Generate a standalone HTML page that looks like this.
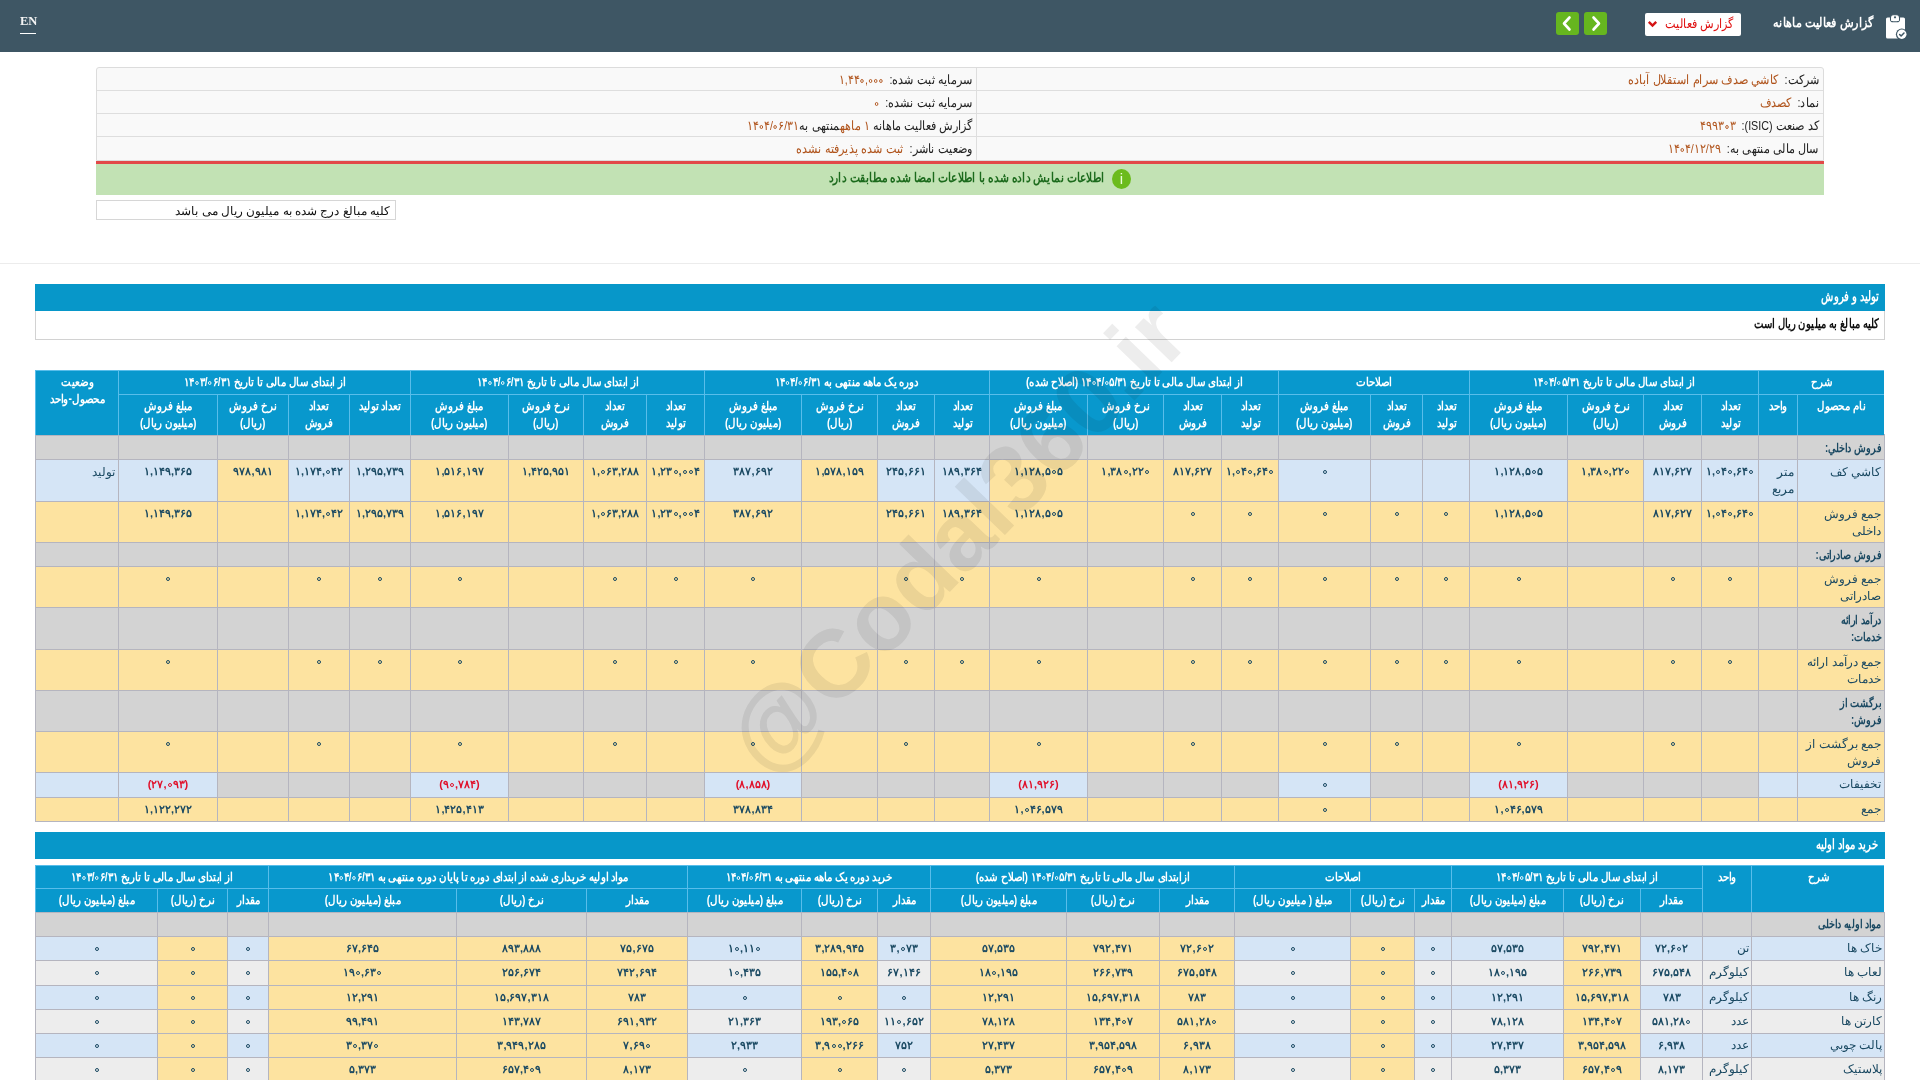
<!DOCTYPE html>
<html lang="fa" dir="rtl">
<head>
<meta charset="utf-8">
<title>گزارش فعالیت ماهانه</title>
<style>
*{box-sizing:border-box;margin:0;padding:0}
html,body{width:1920px;height:1080px;overflow:hidden;background:#fff;font-family:"Liberation Sans",sans-serif;color:#222}
#top{position:absolute;left:0;top:0;width:1920px;height:52px;background:#3e5664}
.abs{position:absolute}
.c,.h{position:absolute;border-left:1px solid #b5b5bf;border-top:1px solid #b5b5bf;text-align:center;font-size:12px;line-height:17px;color:#1a4962;overflow:hidden;white-space:nowrap}
.h{color:#fff;font-weight:bold;border-color:#58bdea;padding-top:3px;line-height:17px}
.h2{padding-top:3px}
.h3{padding-top:3px}
.v{padding-top:3px;font-weight:bold;font-size:11px}
.n{text-align:right;padding-right:3px;padding-top:4px}
.b{font-weight:bold}
.s{padding-top:3px}
.red{color:#e0102a}
.t2{line-height:22px}
.v2{font-weight:bold;font-size:11px}
.nb2{padding-top:0}
.r{text-align:right;padding-right:2px}
.tbl{position:absolute;border-right:1px solid #b5b5bf;border-bottom:1px solid #b5b5bf}
.info{position:absolute;font-size:12.5px;color:#222;white-space:nowrap}
.ov{color:#b0541c}
.sec{font-size:13.5px;font-weight:bold;color:#fff;white-space:nowrap}
.t{display:inline-block;white-space:nowrap}
.ltr{direction:ltr;unicode-bidi:isolate}
.h .t{transform:scaleX(.85);transform-origin:50% 0}
.n .t{transform-origin:100% 0}
.n.b .t{transform:scaleX(.8)}
i.z{display:inline-block;width:4px;height:4px;border:1.3px solid currentColor;border-radius:50%;vertical-align:1px;margin:0 1px}
.sx{display:inline-block;transform:scaleX(.86);transform-origin:100% 50%}
.sx2{display:inline-block;transform:scaleX(.8);transform-origin:100% 50%}
</style>
</head>
<body>
<div id="top">
  <div class="abs" style="left:20px;top:15px;font-family:'Liberation Serif',serif;font-size:12.5px;font-weight:bold;line-height:13px;color:#f4f4f4;direction:ltr">EN</div>
  <div class="abs" style="left:20px;top:33px;width:16px;height:1px;background:#fff"></div>
  <div class="abs" style="left:1556px;top:12px;width:23px;height:23px;background:#66b61f;border-radius:3px"><svg width="23" height="23" viewBox="0 0 23 23"><path d="M13.5 5.5 L8 11.5 L13.5 17.5" fill="none" stroke="#fff" stroke-width="2.6" stroke-linecap="round" stroke-linejoin="round"/></svg></div>
  <div class="abs" style="left:1584px;top:12px;width:23px;height:23px;background:#66b61f;border-radius:3px"><svg width="23" height="23" viewBox="0 0 23 23"><path d="M9.5 5.5 L15 11.5 L9.5 17.5" fill="none" stroke="#fff" stroke-width="2.6" stroke-linecap="round" stroke-linejoin="round"/></svg></div>
  <div class="abs" style="left:1645px;top:13px;width:96px;height:23px;background:#fff;border-radius:2px"></div>
  <svg class="abs" style="left:1647px;top:19px" width="11" height="10" viewBox="0 0 11 10"><path d="M1.8 2.8 L5.5 6.6 L9.2 2.8" fill="none" stroke="#d41414" stroke-width="2.4"/></svg>
  <div class="abs" style="right:186px;top:16px;font-size:13px;color:#e01010;white-space:nowrap"><span class="sx">گزارش فعالیت</span></div>
  <div class="abs" style="right:47px;top:15px;font-size:13px;color:#fff;font-weight:bold;white-space:nowrap"><span class="sx">گزارش فعالیت ماهانه</span></div>
  <svg class="abs" style="left:1884px;top:13px" width="26" height="28" viewBox="0 0 26 28">
    <rect x="2" y="4.5" width="19" height="21" rx="1.6" fill="#fff"/>
    <rect x="6.5" y="1.8" width="9" height="7" rx="2.6" fill="#fff" stroke="#3e5664" stroke-width="1.1"/>
    <rect x="7.2" y="5" width="7.6" height="3" fill="#fff"/>
    <circle cx="11" cy="4.3" r="1.1" fill="#3e5664"/>
    <circle cx="17.8" cy="21.3" r="5.9" fill="#3e5664"/>
    <circle cx="17.8" cy="21.3" r="4.7" fill="#fff"/>
    <path d="M15.6 21.5 l1.5 1.5 l2.9-3" fill="none" stroke="#3e5664" stroke-width="1.5" stroke-linecap="round" stroke-linejoin="round"/>
  </svg>
</div>
</div>

<!-- info box -->
<div class="abs" style="left:96px;top:67px;width:1728px;height:94px;background:#f9f9f9;border:1px solid #dcdcdc;border-radius:3px 3px 0 0"></div>
<div class="abs" style="left:97px;top:90px;width:1726px;height:1px;background:#dedede"></div>
<div class="abs" style="left:97px;top:113px;width:1726px;height:1px;background:#dedede"></div>
<div class="abs" style="left:97px;top:136px;width:1726px;height:1px;background:#dedede"></div>
<div class="abs" style="left:976px;top:68px;width:1px;height:93px;background:#dedede"></div>
<div class="info" style="right:101px;top:72px"><span class="sx">شرکت:&nbsp; <span class="ov">كاشي صدف سرام استقلال آباده</span></span></div>
<div class="info" style="right:101px;top:95px"><span class="sx">نماد:&nbsp; <span class="ov">كصدف</span></span></div>
<div class="info" style="right:101px;top:118px"><span class="sx">کد صنعت (ISIC):&nbsp; <span class="ov"><span class="ltr">۴۹۹۳<i class="z"></i>۳</span></span></span></div>
<div class="info" style="right:101px;top:141px"><span class="sx">سال مالی منتهی به:&nbsp; <span class="ov"><span class="ltr">۱۴<i class="z"></i>۴/۱۲/۲۹</span></span></span></div>
<div class="info" style="right:948px;top:72px"><span class="sx">سرمایه ثبت شده:&nbsp; <span class="ov"><span class="ltr">۱,۴۴<i class="z"></i>,<i class="z"></i><i class="z"></i><i class="z"></i></span></span></span></div>
<div class="info" style="right:948px;top:95px"><span class="sx">سرمایه ثبت نشده:&nbsp; <span class="ov"><span class="ltr"><i class="z"></i></span></span></span></div>
<div class="info" style="right:948px;top:118px"><span class="sx">گزارش فعالیت ماهانه <span class="ov"><span class="ltr">۱</span> ماهه</span>منتهی به<span class="ov"><span class="ltr">۱۴<i class="z"></i>۴/<i class="z"></i>۶/۳۱</span></span></span></div>
<div class="info" style="right:948px;top:141px"><span class="sx">وضعیت ناشر:&nbsp; <span class="ov">ثبت شده پذیرفته نشده</span></span></div>
<div class="abs" style="left:96px;top:161px;width:1728px;height:3px;background:#e24848"></div>
<div class="abs" style="left:96px;top:164px;width:1728px;height:31px;background:#c2e2b4"></div>
<div class="abs" style="left:1112px;top:169px;width:19px;height:20px;border-radius:50%;background:#6bbb1c;color:#eaffd8;font-size:15px;line-height:20px;text-align:center;font-family:'Liberation Sans',sans-serif">i</div>
<div class="abs" style="right:815px;top:170px;font-size:13px;font-weight:bold;color:#1b6a1c;white-space:nowrap"><span class="sx" style="transform:scaleX(.82)">اطلاعات نمایش داده شده با اطلاعات امضا شده مطابقت دارد</span></div>
<div class="abs" style="left:96px;top:200px;width:300px;height:20px;border:1px solid #d6d6d6;background:#fff"></div>
<div class="abs" style="right:1530px;top:204px;font-size:12px;color:#111;white-space:nowrap">کلیه مبالغ درج شده به میلیون ریال می باشد</div>
<div class="abs" style="left:0;top:263px;width:1920px;height:1px;background:#ececec"></div>
<!-- section 1 -->
<div class="abs" style="left:35px;top:284px;width:1850px;height:27px;background:#0797c9"></div>
<div class="abs sec" style="right:41px;top:288px"><span class="sx2" style="transform:scaleX(.72)">تولید و فروش</span></div>
<div class="abs" style="left:35px;top:311px;width:1850px;height:29px;border:1px solid #d2d2d2;border-top:none;background:#fff"></div>
<div class="abs" style="right:41px;top:316px;font-size:13px;font-weight:bold;color:#111;white-space:nowrap"><span class="sx2" style="transform:scaleX(.77)">کلیه مبالغ به میلیون ریال است</span></div>
<!-- section 2 -->
<div class="abs" style="left:35px;top:832px;width:1850px;height:27px;background:#0797c9"></div>
<div class="abs sec" style="right:41px;top:836px"><span class="sx2" style="transform:scaleX(.72)">خرید مواد اولیه</span></div>
<div class="h" style="left:1758px;top:370px;width:126px;height:24px;background:#0898cd;"><span class="t">شرح</span></div>
<div class="h" style="left:1469px;top:370px;width:289px;height:24px;background:#0898cd;"><span class="t">از ابتدای سال مالی تا تاریخ <span class="ltr">۱۴<i class="z"></i>۴/<i class="z"></i>۵/۳۱</span></span></div>
<div class="h" style="left:1278px;top:370px;width:191px;height:24px;background:#0898cd;"><span class="t">اصلاحات</span></div>
<div class="h" style="left:989px;top:370px;width:289px;height:24px;background:#0898cd;"><span class="t">از ابتدای سال مالی تا تاریخ <span class="ltr">۱۴<i class="z"></i>۴/<i class="z"></i>۵/۳۱</span> (اصلاح شده)</span></div>
<div class="h" style="left:704px;top:370px;width:285px;height:24px;background:#0898cd;"><span class="t">دوره یک ماهه منتهی به <span class="ltr">۱۴<i class="z"></i>۴/<i class="z"></i>۶/۳۱</span></span></div>
<div class="h" style="left:410px;top:370px;width:294px;height:24px;background:#0898cd;"><span class="t">از ابتدای سال مالی تا تاریخ <span class="ltr">۱۴<i class="z"></i>۴/<i class="z"></i>۶/۳۱</span></span></div>
<div class="h" style="left:118px;top:370px;width:292px;height:24px;background:#0898cd;"><span class="t">از ابتدای سال مالی تا تاریخ <span class="ltr">۱۴<i class="z"></i>۳/<i class="z"></i>۶/۳۱</span></span></div>
<div class="h h2" style="left:1797px;top:394px;width:87px;height:41px;background:#0898cd;"><span class="t">نام محصول</span></div>
<div class="h h2" style="left:1758px;top:394px;width:39px;height:41px;background:#0898cd;"><span class="t">واحد</span></div>
<div class="h h2" style="left:1701px;top:394px;width:57px;height:41px;background:#0898cd;"><span class="t">تعداد<br>تولید</span></div>
<div class="h h2" style="left:1643px;top:394px;width:58px;height:41px;background:#0898cd;"><span class="t">تعداد<br>فروش</span></div>
<div class="h h2" style="left:1567px;top:394px;width:76px;height:41px;background:#0898cd;"><span class="t">نرخ فروش<br>(ریال)</span></div>
<div class="h h2" style="left:1469px;top:394px;width:98px;height:41px;background:#0898cd;"><span class="t">مبلغ فروش<br>(میلیون ریال)</span></div>
<div class="h h2" style="left:1221px;top:394px;width:57px;height:41px;background:#0898cd;"><span class="t">تعداد<br>تولید</span></div>
<div class="h h2" style="left:1163px;top:394px;width:58px;height:41px;background:#0898cd;"><span class="t">تعداد<br>فروش</span></div>
<div class="h h2" style="left:1087px;top:394px;width:76px;height:41px;background:#0898cd;"><span class="t">نرخ فروش<br>(ریال)</span></div>
<div class="h h2" style="left:989px;top:394px;width:98px;height:41px;background:#0898cd;"><span class="t">مبلغ فروش<br>(میلیون ریال)</span></div>
<div class="h h2" style="left:934px;top:394px;width:55px;height:41px;background:#0898cd;"><span class="t">تعداد<br>تولید</span></div>
<div class="h h2" style="left:877px;top:394px;width:57px;height:41px;background:#0898cd;"><span class="t">تعداد<br>فروش</span></div>
<div class="h h2" style="left:801px;top:394px;width:76px;height:41px;background:#0898cd;"><span class="t">نرخ فروش<br>(ریال)</span></div>
<div class="h h2" style="left:704px;top:394px;width:97px;height:41px;background:#0898cd;"><span class="t">مبلغ فروش<br>(میلیون ریال)</span></div>
<div class="h h2" style="left:646px;top:394px;width:58px;height:41px;background:#0898cd;"><span class="t">تعداد<br>تولید</span></div>
<div class="h h2" style="left:583px;top:394px;width:63px;height:41px;background:#0898cd;"><span class="t">تعداد<br>فروش</span></div>
<div class="h h2" style="left:508px;top:394px;width:75px;height:41px;background:#0898cd;"><span class="t">نرخ فروش<br>(ریال)</span></div>
<div class="h h2" style="left:410px;top:394px;width:98px;height:41px;background:#0898cd;"><span class="t">مبلغ فروش<br>(میلیون ریال)</span></div>
<div class="h h2" style="left:1422px;top:394px;width:47px;height:41px;background:#0898cd;"><span class="t">تعداد<br>تولید</span></div>
<div class="h h2" style="left:1370px;top:394px;width:52px;height:41px;background:#0898cd;"><span class="t">تعداد<br>فروش</span></div>
<div class="h h2" style="left:1278px;top:394px;width:92px;height:41px;background:#0898cd;"><span class="t">مبلغ فروش<br>(میلیون ریال)</span></div>
<div class="h h2" style="left:349px;top:394px;width:61px;height:41px;background:#0898cd;"><span class="t">تعداد تولید</span></div>
<div class="h h2" style="left:288px;top:394px;width:61px;height:41px;background:#0898cd;"><span class="t">تعداد<br>فروش</span></div>
<div class="h h2" style="left:217px;top:394px;width:71px;height:41px;background:#0898cd;"><span class="t">نرخ فروش<br>(ریال)</span></div>
<div class="h h2" style="left:118px;top:394px;width:99px;height:41px;background:#0898cd;"><span class="t">مبلغ فروش<br>(میلیون ریال)</span></div>
<div class="h h3" style="left:35px;top:370px;width:83px;height:65px;background:#0898cd;"><span class="t">وضعیت<br>محصول-واحد</span></div>
<div class="c n b" style="left:1797px;top:435px;width:87px;height:24px;background:#d3d3d3;"><span class="t">فروش داخلي:</span></div>
<div class="c n" style="left:1758px;top:435px;width:39px;height:24px;background:#d3d3d3;"></div>
<div class="c v" style="left:1701px;top:435px;width:57px;height:24px;background:#d3d3d3;"></div>
<div class="c v" style="left:1643px;top:435px;width:58px;height:24px;background:#d3d3d3;"></div>
<div class="c v" style="left:1567px;top:435px;width:76px;height:24px;background:#d3d3d3;"></div>
<div class="c v" style="left:1469px;top:435px;width:98px;height:24px;background:#d3d3d3;"></div>
<div class="c v" style="left:1422px;top:435px;width:47px;height:24px;background:#d3d3d3;"></div>
<div class="c v" style="left:1370px;top:435px;width:52px;height:24px;background:#d3d3d3;"></div>
<div class="c v" style="left:1278px;top:435px;width:92px;height:24px;background:#d3d3d3;"></div>
<div class="c v" style="left:1221px;top:435px;width:57px;height:24px;background:#d3d3d3;"></div>
<div class="c v" style="left:1163px;top:435px;width:58px;height:24px;background:#d3d3d3;"></div>
<div class="c v" style="left:1087px;top:435px;width:76px;height:24px;background:#d3d3d3;"></div>
<div class="c v" style="left:989px;top:435px;width:98px;height:24px;background:#d3d3d3;"></div>
<div class="c v" style="left:934px;top:435px;width:55px;height:24px;background:#d3d3d3;"></div>
<div class="c v" style="left:877px;top:435px;width:57px;height:24px;background:#d3d3d3;"></div>
<div class="c v" style="left:801px;top:435px;width:76px;height:24px;background:#d3d3d3;"></div>
<div class="c v" style="left:704px;top:435px;width:97px;height:24px;background:#d3d3d3;"></div>
<div class="c v" style="left:646px;top:435px;width:58px;height:24px;background:#d3d3d3;"></div>
<div class="c v" style="left:583px;top:435px;width:63px;height:24px;background:#d3d3d3;"></div>
<div class="c v" style="left:508px;top:435px;width:75px;height:24px;background:#d3d3d3;"></div>
<div class="c v" style="left:410px;top:435px;width:98px;height:24px;background:#d3d3d3;"></div>
<div class="c v" style="left:349px;top:435px;width:61px;height:24px;background:#d3d3d3;"></div>
<div class="c v" style="left:288px;top:435px;width:61px;height:24px;background:#d3d3d3;"></div>
<div class="c v" style="left:217px;top:435px;width:71px;height:24px;background:#d3d3d3;"></div>
<div class="c v" style="left:118px;top:435px;width:99px;height:24px;background:#d3d3d3;"></div>
<div class="c n" style="left:35px;top:435px;width:83px;height:24px;background:#d3d3d3;"></div>
<div class="c n" style="left:1797px;top:459px;width:87px;height:42px;background:#d5e5f6;"><span class="t">کاشي کف</span></div>
<div class="c n" style="left:1758px;top:459px;width:39px;height:42px;background:#d5e5f6;"><span class="t">متر<br>مربع</span></div>
<div class="c v" style="left:1701px;top:459px;width:57px;height:42px;background:#d5e5f6;"><span class="t"><span class="ltr">۱,<i class="z"></i>۴<i class="z"></i>,۶۴<i class="z"></i></span></span></div>
<div class="c v" style="left:1643px;top:459px;width:58px;height:42px;background:#d5e5f6;"><span class="t"><span class="ltr">۸۱۷,۶۲۷</span></span></div>
<div class="c v" style="left:1567px;top:459px;width:76px;height:42px;background:#fde3a0;"><span class="t"><span class="ltr">۱,۳۸<i class="z"></i>,۲۲<i class="z"></i></span></span></div>
<div class="c v" style="left:1469px;top:459px;width:98px;height:42px;background:#d5e5f6;"><span class="t"><span class="ltr">۱,۱۲۸,۵<i class="z"></i>۵</span></span></div>
<div class="c v" style="left:1422px;top:459px;width:47px;height:42px;background:#d5e5f6;"></div>
<div class="c v" style="left:1370px;top:459px;width:52px;height:42px;background:#d5e5f6;"></div>
<div class="c v" style="left:1278px;top:459px;width:92px;height:42px;background:#d5e5f6;"><span class="t"><span class="ltr"><i class="z"></i></span></span></div>
<div class="c v" style="left:1221px;top:459px;width:57px;height:42px;background:#fde3a0;"><span class="t"><span class="ltr">۱,<i class="z"></i>۴<i class="z"></i>,۶۴<i class="z"></i></span></span></div>
<div class="c v" style="left:1163px;top:459px;width:58px;height:42px;background:#fde3a0;"><span class="t"><span class="ltr">۸۱۷,۶۲۷</span></span></div>
<div class="c v" style="left:1087px;top:459px;width:76px;height:42px;background:#fde3a0;"><span class="t"><span class="ltr">۱,۳۸<i class="z"></i>,۲۲<i class="z"></i></span></span></div>
<div class="c v" style="left:989px;top:459px;width:98px;height:42px;background:#fde3a0;"><span class="t"><span class="ltr">۱,۱۲۸,۵<i class="z"></i>۵</span></span></div>
<div class="c v" style="left:934px;top:459px;width:55px;height:42px;background:#d5e5f6;"><span class="t"><span class="ltr">۱۸۹,۳۶۴</span></span></div>
<div class="c v" style="left:877px;top:459px;width:57px;height:42px;background:#d5e5f6;"><span class="t"><span class="ltr">۲۴۵,۶۶۱</span></span></div>
<div class="c v" style="left:801px;top:459px;width:76px;height:42px;background:#fde3a0;"><span class="t"><span class="ltr">۱,۵۷۸,۱۵۹</span></span></div>
<div class="c v" style="left:704px;top:459px;width:97px;height:42px;background:#d5e5f6;"><span class="t"><span class="ltr">۳۸۷,۶۹۲</span></span></div>
<div class="c v" style="left:646px;top:459px;width:58px;height:42px;background:#fde3a0;"><span class="t"><span class="ltr">۱,۲۳<i class="z"></i>,<i class="z"></i><i class="z"></i>۴</span></span></div>
<div class="c v" style="left:583px;top:459px;width:63px;height:42px;background:#fde3a0;"><span class="t"><span class="ltr">۱,<i class="z"></i>۶۳,۲۸۸</span></span></div>
<div class="c v" style="left:508px;top:459px;width:75px;height:42px;background:#fde3a0;"><span class="t"><span class="ltr">۱,۴۲۵,۹۵۱</span></span></div>
<div class="c v" style="left:410px;top:459px;width:98px;height:42px;background:#fde3a0;"><span class="t"><span class="ltr">۱,۵۱۶,۱۹۷</span></span></div>
<div class="c v" style="left:349px;top:459px;width:61px;height:42px;background:#d5e5f6;"><span class="t"><span class="ltr">۱,۲۹۵,۷۳۹</span></span></div>
<div class="c v" style="left:288px;top:459px;width:61px;height:42px;background:#d5e5f6;"><span class="t"><span class="ltr">۱,۱۷۴,<i class="z"></i>۴۲</span></span></div>
<div class="c v" style="left:217px;top:459px;width:71px;height:42px;background:#fde3a0;"><span class="t"><span class="ltr">۹۷۸,۹۸۱</span></span></div>
<div class="c v" style="left:118px;top:459px;width:99px;height:42px;background:#d5e5f6;"><span class="t"><span class="ltr">۱,۱۴۹,۳۶۵</span></span></div>
<div class="c n" style="left:35px;top:459px;width:83px;height:42px;background:#d5e5f6;"><span class="t">تولید</span></div>
<div class="c n" style="left:1797px;top:501px;width:87px;height:41px;background:#fde3a0;"><span class="t">جمع فروش<br>داخلی</span></div>
<div class="c n" style="left:1758px;top:501px;width:39px;height:41px;background:#fde3a0;"></div>
<div class="c v" style="left:1701px;top:501px;width:57px;height:41px;background:#fde3a0;"><span class="t"><span class="ltr">۱,<i class="z"></i>۴<i class="z"></i>,۶۴<i class="z"></i></span></span></div>
<div class="c v" style="left:1643px;top:501px;width:58px;height:41px;background:#fde3a0;"><span class="t"><span class="ltr">۸۱۷,۶۲۷</span></span></div>
<div class="c v" style="left:1567px;top:501px;width:76px;height:41px;background:#fde3a0;"></div>
<div class="c v" style="left:1469px;top:501px;width:98px;height:41px;background:#fde3a0;"><span class="t"><span class="ltr">۱,۱۲۸,۵<i class="z"></i>۵</span></span></div>
<div class="c v" style="left:1422px;top:501px;width:47px;height:41px;background:#fde3a0;"><span class="t"><span class="ltr"><i class="z"></i></span></span></div>
<div class="c v" style="left:1370px;top:501px;width:52px;height:41px;background:#fde3a0;"><span class="t"><span class="ltr"><i class="z"></i></span></span></div>
<div class="c v" style="left:1278px;top:501px;width:92px;height:41px;background:#fde3a0;"><span class="t"><span class="ltr"><i class="z"></i></span></span></div>
<div class="c v" style="left:1221px;top:501px;width:57px;height:41px;background:#fde3a0;"><span class="t"><span class="ltr"><i class="z"></i></span></span></div>
<div class="c v" style="left:1163px;top:501px;width:58px;height:41px;background:#fde3a0;"><span class="t"><span class="ltr"><i class="z"></i></span></span></div>
<div class="c v" style="left:1087px;top:501px;width:76px;height:41px;background:#fde3a0;"></div>
<div class="c v" style="left:989px;top:501px;width:98px;height:41px;background:#fde3a0;"><span class="t"><span class="ltr">۱,۱۲۸,۵<i class="z"></i>۵</span></span></div>
<div class="c v" style="left:934px;top:501px;width:55px;height:41px;background:#fde3a0;"><span class="t"><span class="ltr">۱۸۹,۳۶۴</span></span></div>
<div class="c v" style="left:877px;top:501px;width:57px;height:41px;background:#fde3a0;"><span class="t"><span class="ltr">۲۴۵,۶۶۱</span></span></div>
<div class="c v" style="left:801px;top:501px;width:76px;height:41px;background:#fde3a0;"></div>
<div class="c v" style="left:704px;top:501px;width:97px;height:41px;background:#fde3a0;"><span class="t"><span class="ltr">۳۸۷,۶۹۲</span></span></div>
<div class="c v" style="left:646px;top:501px;width:58px;height:41px;background:#fde3a0;"><span class="t"><span class="ltr">۱,۲۳<i class="z"></i>,<i class="z"></i><i class="z"></i>۴</span></span></div>
<div class="c v" style="left:583px;top:501px;width:63px;height:41px;background:#fde3a0;"><span class="t"><span class="ltr">۱,<i class="z"></i>۶۳,۲۸۸</span></span></div>
<div class="c v" style="left:508px;top:501px;width:75px;height:41px;background:#fde3a0;"></div>
<div class="c v" style="left:410px;top:501px;width:98px;height:41px;background:#fde3a0;"><span class="t"><span class="ltr">۱,۵۱۶,۱۹۷</span></span></div>
<div class="c v" style="left:349px;top:501px;width:61px;height:41px;background:#fde3a0;"><span class="t"><span class="ltr">۱,۲۹۵,۷۳۹</span></span></div>
<div class="c v" style="left:288px;top:501px;width:61px;height:41px;background:#fde3a0;"><span class="t"><span class="ltr">۱,۱۷۴,<i class="z"></i>۴۲</span></span></div>
<div class="c v" style="left:217px;top:501px;width:71px;height:41px;background:#fde3a0;"></div>
<div class="c v" style="left:118px;top:501px;width:99px;height:41px;background:#fde3a0;"><span class="t"><span class="ltr">۱,۱۴۹,۳۶۵</span></span></div>
<div class="c n" style="left:35px;top:501px;width:83px;height:41px;background:#fde3a0;"></div>
<div class="c n b" style="left:1797px;top:542px;width:87px;height:24px;background:#d3d3d3;"><span class="t">فروش صادراتی:</span></div>
<div class="c n" style="left:1758px;top:542px;width:39px;height:24px;background:#d3d3d3;"></div>
<div class="c v" style="left:1701px;top:542px;width:57px;height:24px;background:#d3d3d3;"></div>
<div class="c v" style="left:1643px;top:542px;width:58px;height:24px;background:#d3d3d3;"></div>
<div class="c v" style="left:1567px;top:542px;width:76px;height:24px;background:#d3d3d3;"></div>
<div class="c v" style="left:1469px;top:542px;width:98px;height:24px;background:#d3d3d3;"></div>
<div class="c v" style="left:1422px;top:542px;width:47px;height:24px;background:#d3d3d3;"></div>
<div class="c v" style="left:1370px;top:542px;width:52px;height:24px;background:#d3d3d3;"></div>
<div class="c v" style="left:1278px;top:542px;width:92px;height:24px;background:#d3d3d3;"></div>
<div class="c v" style="left:1221px;top:542px;width:57px;height:24px;background:#d3d3d3;"></div>
<div class="c v" style="left:1163px;top:542px;width:58px;height:24px;background:#d3d3d3;"></div>
<div class="c v" style="left:1087px;top:542px;width:76px;height:24px;background:#d3d3d3;"></div>
<div class="c v" style="left:989px;top:542px;width:98px;height:24px;background:#d3d3d3;"></div>
<div class="c v" style="left:934px;top:542px;width:55px;height:24px;background:#d3d3d3;"></div>
<div class="c v" style="left:877px;top:542px;width:57px;height:24px;background:#d3d3d3;"></div>
<div class="c v" style="left:801px;top:542px;width:76px;height:24px;background:#d3d3d3;"></div>
<div class="c v" style="left:704px;top:542px;width:97px;height:24px;background:#d3d3d3;"></div>
<div class="c v" style="left:646px;top:542px;width:58px;height:24px;background:#d3d3d3;"></div>
<div class="c v" style="left:583px;top:542px;width:63px;height:24px;background:#d3d3d3;"></div>
<div class="c v" style="left:508px;top:542px;width:75px;height:24px;background:#d3d3d3;"></div>
<div class="c v" style="left:410px;top:542px;width:98px;height:24px;background:#d3d3d3;"></div>
<div class="c v" style="left:349px;top:542px;width:61px;height:24px;background:#d3d3d3;"></div>
<div class="c v" style="left:288px;top:542px;width:61px;height:24px;background:#d3d3d3;"></div>
<div class="c v" style="left:217px;top:542px;width:71px;height:24px;background:#d3d3d3;"></div>
<div class="c v" style="left:118px;top:542px;width:99px;height:24px;background:#d3d3d3;"></div>
<div class="c n" style="left:35px;top:542px;width:83px;height:24px;background:#d3d3d3;"></div>
<div class="c n" style="left:1797px;top:566px;width:87px;height:41px;background:#fde3a0;"><span class="t">جمع فروش<br>صادراتی</span></div>
<div class="c n" style="left:1758px;top:566px;width:39px;height:41px;background:#fde3a0;"></div>
<div class="c v" style="left:1701px;top:566px;width:57px;height:41px;background:#fde3a0;"><span class="t"><span class="ltr"><i class="z"></i></span></span></div>
<div class="c v" style="left:1643px;top:566px;width:58px;height:41px;background:#fde3a0;"><span class="t"><span class="ltr"><i class="z"></i></span></span></div>
<div class="c v" style="left:1567px;top:566px;width:76px;height:41px;background:#fde3a0;"></div>
<div class="c v" style="left:1469px;top:566px;width:98px;height:41px;background:#fde3a0;"><span class="t"><span class="ltr"><i class="z"></i></span></span></div>
<div class="c v" style="left:1422px;top:566px;width:47px;height:41px;background:#fde3a0;"><span class="t"><span class="ltr"><i class="z"></i></span></span></div>
<div class="c v" style="left:1370px;top:566px;width:52px;height:41px;background:#fde3a0;"><span class="t"><span class="ltr"><i class="z"></i></span></span></div>
<div class="c v" style="left:1278px;top:566px;width:92px;height:41px;background:#fde3a0;"><span class="t"><span class="ltr"><i class="z"></i></span></span></div>
<div class="c v" style="left:1221px;top:566px;width:57px;height:41px;background:#fde3a0;"><span class="t"><span class="ltr"><i class="z"></i></span></span></div>
<div class="c v" style="left:1163px;top:566px;width:58px;height:41px;background:#fde3a0;"><span class="t"><span class="ltr"><i class="z"></i></span></span></div>
<div class="c v" style="left:1087px;top:566px;width:76px;height:41px;background:#fde3a0;"></div>
<div class="c v" style="left:989px;top:566px;width:98px;height:41px;background:#fde3a0;"><span class="t"><span class="ltr"><i class="z"></i></span></span></div>
<div class="c v" style="left:934px;top:566px;width:55px;height:41px;background:#fde3a0;"><span class="t"><span class="ltr"><i class="z"></i></span></span></div>
<div class="c v" style="left:877px;top:566px;width:57px;height:41px;background:#fde3a0;"><span class="t"><span class="ltr"><i class="z"></i></span></span></div>
<div class="c v" style="left:801px;top:566px;width:76px;height:41px;background:#fde3a0;"></div>
<div class="c v" style="left:704px;top:566px;width:97px;height:41px;background:#fde3a0;"><span class="t"><span class="ltr"><i class="z"></i></span></span></div>
<div class="c v" style="left:646px;top:566px;width:58px;height:41px;background:#fde3a0;"><span class="t"><span class="ltr"><i class="z"></i></span></span></div>
<div class="c v" style="left:583px;top:566px;width:63px;height:41px;background:#fde3a0;"><span class="t"><span class="ltr"><i class="z"></i></span></span></div>
<div class="c v" style="left:508px;top:566px;width:75px;height:41px;background:#fde3a0;"></div>
<div class="c v" style="left:410px;top:566px;width:98px;height:41px;background:#fde3a0;"><span class="t"><span class="ltr"><i class="z"></i></span></span></div>
<div class="c v" style="left:349px;top:566px;width:61px;height:41px;background:#fde3a0;"><span class="t"><span class="ltr"><i class="z"></i></span></span></div>
<div class="c v" style="left:288px;top:566px;width:61px;height:41px;background:#fde3a0;"><span class="t"><span class="ltr"><i class="z"></i></span></span></div>
<div class="c v" style="left:217px;top:566px;width:71px;height:41px;background:#fde3a0;"></div>
<div class="c v" style="left:118px;top:566px;width:99px;height:41px;background:#fde3a0;"><span class="t"><span class="ltr"><i class="z"></i></span></span></div>
<div class="c n" style="left:35px;top:566px;width:83px;height:41px;background:#fde3a0;"></div>
<div class="c n b" style="left:1797px;top:607px;width:87px;height:42px;background:#d3d3d3;"><span class="t">درآمد ارائه<br>خدمات:</span></div>
<div class="c n" style="left:1758px;top:607px;width:39px;height:42px;background:#d3d3d3;"></div>
<div class="c v" style="left:1701px;top:607px;width:57px;height:42px;background:#d3d3d3;"></div>
<div class="c v" style="left:1643px;top:607px;width:58px;height:42px;background:#d3d3d3;"></div>
<div class="c v" style="left:1567px;top:607px;width:76px;height:42px;background:#d3d3d3;"></div>
<div class="c v" style="left:1469px;top:607px;width:98px;height:42px;background:#d3d3d3;"></div>
<div class="c v" style="left:1422px;top:607px;width:47px;height:42px;background:#d3d3d3;"></div>
<div class="c v" style="left:1370px;top:607px;width:52px;height:42px;background:#d3d3d3;"></div>
<div class="c v" style="left:1278px;top:607px;width:92px;height:42px;background:#d3d3d3;"></div>
<div class="c v" style="left:1221px;top:607px;width:57px;height:42px;background:#d3d3d3;"></div>
<div class="c v" style="left:1163px;top:607px;width:58px;height:42px;background:#d3d3d3;"></div>
<div class="c v" style="left:1087px;top:607px;width:76px;height:42px;background:#d3d3d3;"></div>
<div class="c v" style="left:989px;top:607px;width:98px;height:42px;background:#d3d3d3;"></div>
<div class="c v" style="left:934px;top:607px;width:55px;height:42px;background:#d3d3d3;"></div>
<div class="c v" style="left:877px;top:607px;width:57px;height:42px;background:#d3d3d3;"></div>
<div class="c v" style="left:801px;top:607px;width:76px;height:42px;background:#d3d3d3;"></div>
<div class="c v" style="left:704px;top:607px;width:97px;height:42px;background:#d3d3d3;"></div>
<div class="c v" style="left:646px;top:607px;width:58px;height:42px;background:#d3d3d3;"></div>
<div class="c v" style="left:583px;top:607px;width:63px;height:42px;background:#d3d3d3;"></div>
<div class="c v" style="left:508px;top:607px;width:75px;height:42px;background:#d3d3d3;"></div>
<div class="c v" style="left:410px;top:607px;width:98px;height:42px;background:#d3d3d3;"></div>
<div class="c v" style="left:349px;top:607px;width:61px;height:42px;background:#d3d3d3;"></div>
<div class="c v" style="left:288px;top:607px;width:61px;height:42px;background:#d3d3d3;"></div>
<div class="c v" style="left:217px;top:607px;width:71px;height:42px;background:#d3d3d3;"></div>
<div class="c v" style="left:118px;top:607px;width:99px;height:42px;background:#d3d3d3;"></div>
<div class="c n" style="left:35px;top:607px;width:83px;height:42px;background:#d3d3d3;"></div>
<div class="c n" style="left:1797px;top:649px;width:87px;height:41px;background:#fde3a0;"><span class="t">جمع درآمد ارائه<br>خدمات</span></div>
<div class="c n" style="left:1758px;top:649px;width:39px;height:41px;background:#fde3a0;"></div>
<div class="c v" style="left:1701px;top:649px;width:57px;height:41px;background:#fde3a0;"><span class="t"><span class="ltr"><i class="z"></i></span></span></div>
<div class="c v" style="left:1643px;top:649px;width:58px;height:41px;background:#fde3a0;"><span class="t"><span class="ltr"><i class="z"></i></span></span></div>
<div class="c v" style="left:1567px;top:649px;width:76px;height:41px;background:#fde3a0;"></div>
<div class="c v" style="left:1469px;top:649px;width:98px;height:41px;background:#fde3a0;"><span class="t"><span class="ltr"><i class="z"></i></span></span></div>
<div class="c v" style="left:1422px;top:649px;width:47px;height:41px;background:#fde3a0;"><span class="t"><span class="ltr"><i class="z"></i></span></span></div>
<div class="c v" style="left:1370px;top:649px;width:52px;height:41px;background:#fde3a0;"><span class="t"><span class="ltr"><i class="z"></i></span></span></div>
<div class="c v" style="left:1278px;top:649px;width:92px;height:41px;background:#fde3a0;"><span class="t"><span class="ltr"><i class="z"></i></span></span></div>
<div class="c v" style="left:1221px;top:649px;width:57px;height:41px;background:#fde3a0;"><span class="t"><span class="ltr"><i class="z"></i></span></span></div>
<div class="c v" style="left:1163px;top:649px;width:58px;height:41px;background:#fde3a0;"><span class="t"><span class="ltr"><i class="z"></i></span></span></div>
<div class="c v" style="left:1087px;top:649px;width:76px;height:41px;background:#fde3a0;"></div>
<div class="c v" style="left:989px;top:649px;width:98px;height:41px;background:#fde3a0;"><span class="t"><span class="ltr"><i class="z"></i></span></span></div>
<div class="c v" style="left:934px;top:649px;width:55px;height:41px;background:#fde3a0;"><span class="t"><span class="ltr"><i class="z"></i></span></span></div>
<div class="c v" style="left:877px;top:649px;width:57px;height:41px;background:#fde3a0;"><span class="t"><span class="ltr"><i class="z"></i></span></span></div>
<div class="c v" style="left:801px;top:649px;width:76px;height:41px;background:#fde3a0;"></div>
<div class="c v" style="left:704px;top:649px;width:97px;height:41px;background:#fde3a0;"><span class="t"><span class="ltr"><i class="z"></i></span></span></div>
<div class="c v" style="left:646px;top:649px;width:58px;height:41px;background:#fde3a0;"><span class="t"><span class="ltr"><i class="z"></i></span></span></div>
<div class="c v" style="left:583px;top:649px;width:63px;height:41px;background:#fde3a0;"><span class="t"><span class="ltr"><i class="z"></i></span></span></div>
<div class="c v" style="left:508px;top:649px;width:75px;height:41px;background:#fde3a0;"></div>
<div class="c v" style="left:410px;top:649px;width:98px;height:41px;background:#fde3a0;"><span class="t"><span class="ltr"><i class="z"></i></span></span></div>
<div class="c v" style="left:349px;top:649px;width:61px;height:41px;background:#fde3a0;"><span class="t"><span class="ltr"><i class="z"></i></span></span></div>
<div class="c v" style="left:288px;top:649px;width:61px;height:41px;background:#fde3a0;"><span class="t"><span class="ltr"><i class="z"></i></span></span></div>
<div class="c v" style="left:217px;top:649px;width:71px;height:41px;background:#fde3a0;"></div>
<div class="c v" style="left:118px;top:649px;width:99px;height:41px;background:#fde3a0;"><span class="t"><span class="ltr"><i class="z"></i></span></span></div>
<div class="c n" style="left:35px;top:649px;width:83px;height:41px;background:#fde3a0;"></div>
<div class="c n b" style="left:1797px;top:690px;width:87px;height:41px;background:#d3d3d3;"><span class="t">برگشت از<br>فروش:</span></div>
<div class="c n" style="left:1758px;top:690px;width:39px;height:41px;background:#d3d3d3;"></div>
<div class="c v" style="left:1701px;top:690px;width:57px;height:41px;background:#d3d3d3;"></div>
<div class="c v" style="left:1643px;top:690px;width:58px;height:41px;background:#d3d3d3;"></div>
<div class="c v" style="left:1567px;top:690px;width:76px;height:41px;background:#d3d3d3;"></div>
<div class="c v" style="left:1469px;top:690px;width:98px;height:41px;background:#d3d3d3;"></div>
<div class="c v" style="left:1422px;top:690px;width:47px;height:41px;background:#d3d3d3;"></div>
<div class="c v" style="left:1370px;top:690px;width:52px;height:41px;background:#d3d3d3;"></div>
<div class="c v" style="left:1278px;top:690px;width:92px;height:41px;background:#d3d3d3;"></div>
<div class="c v" style="left:1221px;top:690px;width:57px;height:41px;background:#d3d3d3;"></div>
<div class="c v" style="left:1163px;top:690px;width:58px;height:41px;background:#d3d3d3;"></div>
<div class="c v" style="left:1087px;top:690px;width:76px;height:41px;background:#d3d3d3;"></div>
<div class="c v" style="left:989px;top:690px;width:98px;height:41px;background:#d3d3d3;"></div>
<div class="c v" style="left:934px;top:690px;width:55px;height:41px;background:#d3d3d3;"></div>
<div class="c v" style="left:877px;top:690px;width:57px;height:41px;background:#d3d3d3;"></div>
<div class="c v" style="left:801px;top:690px;width:76px;height:41px;background:#d3d3d3;"></div>
<div class="c v" style="left:704px;top:690px;width:97px;height:41px;background:#d3d3d3;"></div>
<div class="c v" style="left:646px;top:690px;width:58px;height:41px;background:#d3d3d3;"></div>
<div class="c v" style="left:583px;top:690px;width:63px;height:41px;background:#d3d3d3;"></div>
<div class="c v" style="left:508px;top:690px;width:75px;height:41px;background:#d3d3d3;"></div>
<div class="c v" style="left:410px;top:690px;width:98px;height:41px;background:#d3d3d3;"></div>
<div class="c v" style="left:349px;top:690px;width:61px;height:41px;background:#d3d3d3;"></div>
<div class="c v" style="left:288px;top:690px;width:61px;height:41px;background:#d3d3d3;"></div>
<div class="c v" style="left:217px;top:690px;width:71px;height:41px;background:#d3d3d3;"></div>
<div class="c v" style="left:118px;top:690px;width:99px;height:41px;background:#d3d3d3;"></div>
<div class="c n" style="left:35px;top:690px;width:83px;height:41px;background:#d3d3d3;"></div>
<div class="c n" style="left:1797px;top:731px;width:87px;height:41px;background:#fde3a0;"><span class="t">جمع برگشت از<br>فروش</span></div>
<div class="c n" style="left:1758px;top:731px;width:39px;height:41px;background:#fde3a0;"></div>
<div class="c v" style="left:1701px;top:731px;width:57px;height:41px;background:#fde3a0;"></div>
<div class="c v" style="left:1643px;top:731px;width:58px;height:41px;background:#fde3a0;"><span class="t"><span class="ltr"><i class="z"></i></span></span></div>
<div class="c v" style="left:1567px;top:731px;width:76px;height:41px;background:#fde3a0;"></div>
<div class="c v" style="left:1469px;top:731px;width:98px;height:41px;background:#fde3a0;"><span class="t"><span class="ltr"><i class="z"></i></span></span></div>
<div class="c v" style="left:1422px;top:731px;width:47px;height:41px;background:#fde3a0;"></div>
<div class="c v" style="left:1370px;top:731px;width:52px;height:41px;background:#fde3a0;"><span class="t"><span class="ltr"><i class="z"></i></span></span></div>
<div class="c v" style="left:1278px;top:731px;width:92px;height:41px;background:#fde3a0;"><span class="t"><span class="ltr"><i class="z"></i></span></span></div>
<div class="c v" style="left:1221px;top:731px;width:57px;height:41px;background:#fde3a0;"></div>
<div class="c v" style="left:1163px;top:731px;width:58px;height:41px;background:#fde3a0;"><span class="t"><span class="ltr"><i class="z"></i></span></span></div>
<div class="c v" style="left:1087px;top:731px;width:76px;height:41px;background:#fde3a0;"></div>
<div class="c v" style="left:989px;top:731px;width:98px;height:41px;background:#fde3a0;"><span class="t"><span class="ltr"><i class="z"></i></span></span></div>
<div class="c v" style="left:934px;top:731px;width:55px;height:41px;background:#fde3a0;"></div>
<div class="c v" style="left:877px;top:731px;width:57px;height:41px;background:#fde3a0;"><span class="t"><span class="ltr"><i class="z"></i></span></span></div>
<div class="c v" style="left:801px;top:731px;width:76px;height:41px;background:#fde3a0;"></div>
<div class="c v" style="left:704px;top:731px;width:97px;height:41px;background:#fde3a0;"><span class="t"><span class="ltr"><i class="z"></i></span></span></div>
<div class="c v" style="left:646px;top:731px;width:58px;height:41px;background:#fde3a0;"></div>
<div class="c v" style="left:583px;top:731px;width:63px;height:41px;background:#fde3a0;"><span class="t"><span class="ltr"><i class="z"></i></span></span></div>
<div class="c v" style="left:508px;top:731px;width:75px;height:41px;background:#fde3a0;"></div>
<div class="c v" style="left:410px;top:731px;width:98px;height:41px;background:#fde3a0;"><span class="t"><span class="ltr"><i class="z"></i></span></span></div>
<div class="c v" style="left:349px;top:731px;width:61px;height:41px;background:#fde3a0;"></div>
<div class="c v" style="left:288px;top:731px;width:61px;height:41px;background:#fde3a0;"><span class="t"><span class="ltr"><i class="z"></i></span></span></div>
<div class="c v" style="left:217px;top:731px;width:71px;height:41px;background:#fde3a0;"></div>
<div class="c v" style="left:118px;top:731px;width:99px;height:41px;background:#fde3a0;"><span class="t"><span class="ltr"><i class="z"></i></span></span></div>
<div class="c n" style="left:35px;top:731px;width:83px;height:41px;background:#fde3a0;"></div>
<div class="c n s" style="left:1797px;top:772px;width:87px;height:25px;background:#d5e5f6;"><span class="t">تخفیفات</span></div>
<div class="c" style="left:1758px;top:772px;width:39px;height:25px;background:#d5e5f6;"></div>
<div class="c" style="left:1701px;top:772px;width:57px;height:25px;background:#d3d3d3;"></div>
<div class="c" style="left:1643px;top:772px;width:58px;height:25px;background:#d3d3d3;"></div>
<div class="c" style="left:1567px;top:772px;width:76px;height:25px;background:#d3d3d3;"></div>
<div class="c v s" style="left:1469px;top:772px;width:98px;height:25px;background:#d5e5f6;"><span class="t"><span class="red">(<span class="ltr">۸۱,۹۲۶</span>)</span></span></div>
<div class="c" style="left:1422px;top:772px;width:47px;height:25px;background:#d3d3d3;"></div>
<div class="c" style="left:1370px;top:772px;width:52px;height:25px;background:#d3d3d3;"></div>
<div class="c v s" style="left:1278px;top:772px;width:92px;height:25px;background:#d5e5f6;"><span class="t"><span class="ltr"><i class="z"></i></span></span></div>
<div class="c" style="left:1221px;top:772px;width:57px;height:25px;background:#d3d3d3;"></div>
<div class="c" style="left:1163px;top:772px;width:58px;height:25px;background:#d3d3d3;"></div>
<div class="c" style="left:1087px;top:772px;width:76px;height:25px;background:#d3d3d3;"></div>
<div class="c v s" style="left:989px;top:772px;width:98px;height:25px;background:#d5e5f6;"><span class="t"><span class="red">(<span class="ltr">۸۱,۹۲۶</span>)</span></span></div>
<div class="c" style="left:934px;top:772px;width:55px;height:25px;background:#d3d3d3;"></div>
<div class="c" style="left:877px;top:772px;width:57px;height:25px;background:#d3d3d3;"></div>
<div class="c" style="left:801px;top:772px;width:76px;height:25px;background:#d3d3d3;"></div>
<div class="c v s" style="left:704px;top:772px;width:97px;height:25px;background:#d5e5f6;"><span class="t"><span class="red">(<span class="ltr">۸,۸۵۸</span>)</span></span></div>
<div class="c" style="left:646px;top:772px;width:58px;height:25px;background:#d3d3d3;"></div>
<div class="c" style="left:583px;top:772px;width:63px;height:25px;background:#d3d3d3;"></div>
<div class="c" style="left:508px;top:772px;width:75px;height:25px;background:#d3d3d3;"></div>
<div class="c v s" style="left:410px;top:772px;width:98px;height:25px;background:#d5e5f6;"><span class="t"><span class="red">(<span class="ltr">۹<i class="z"></i>,۷۸۴</span>)</span></span></div>
<div class="c" style="left:349px;top:772px;width:61px;height:25px;background:#d3d3d3;"></div>
<div class="c" style="left:288px;top:772px;width:61px;height:25px;background:#d3d3d3;"></div>
<div class="c" style="left:217px;top:772px;width:71px;height:25px;background:#d3d3d3;"></div>
<div class="c v s" style="left:118px;top:772px;width:99px;height:25px;background:#d5e5f6;"><span class="t"><span class="red">(<span class="ltr">۲۷,<i class="z"></i>۹۳</span>)</span></span></div>
<div class="c" style="left:35px;top:772px;width:83px;height:25px;background:#d5e5f6;"></div>
<div class="c n s" style="left:1797px;top:797px;width:87px;height:24px;background:#fde3a0;"><span class="t">جمع</span></div>
<div class="c v s" style="left:1758px;top:797px;width:39px;height:24px;background:#fde3a0;"></div>
<div class="c v s" style="left:1701px;top:797px;width:57px;height:24px;background:#fde3a0;"></div>
<div class="c v s" style="left:1643px;top:797px;width:58px;height:24px;background:#fde3a0;"></div>
<div class="c v s" style="left:1567px;top:797px;width:76px;height:24px;background:#fde3a0;"></div>
<div class="c v s" style="left:1469px;top:797px;width:98px;height:24px;background:#fde3a0;"><span class="t"><span class="ltr">۱,<i class="z"></i>۴۶,۵۷۹</span></span></div>
<div class="c v s" style="left:1422px;top:797px;width:47px;height:24px;background:#fde3a0;"></div>
<div class="c v s" style="left:1370px;top:797px;width:52px;height:24px;background:#fde3a0;"></div>
<div class="c v s" style="left:1278px;top:797px;width:92px;height:24px;background:#fde3a0;"><span class="t"><span class="ltr"><i class="z"></i></span></span></div>
<div class="c v s" style="left:1221px;top:797px;width:57px;height:24px;background:#fde3a0;"></div>
<div class="c v s" style="left:1163px;top:797px;width:58px;height:24px;background:#fde3a0;"></div>
<div class="c v s" style="left:1087px;top:797px;width:76px;height:24px;background:#fde3a0;"></div>
<div class="c v s" style="left:989px;top:797px;width:98px;height:24px;background:#fde3a0;"><span class="t"><span class="ltr">۱,<i class="z"></i>۴۶,۵۷۹</span></span></div>
<div class="c v s" style="left:934px;top:797px;width:55px;height:24px;background:#fde3a0;"></div>
<div class="c v s" style="left:877px;top:797px;width:57px;height:24px;background:#fde3a0;"></div>
<div class="c v s" style="left:801px;top:797px;width:76px;height:24px;background:#fde3a0;"></div>
<div class="c v s" style="left:704px;top:797px;width:97px;height:24px;background:#fde3a0;"><span class="t"><span class="ltr">۳۷۸,۸۳۴</span></span></div>
<div class="c v s" style="left:646px;top:797px;width:58px;height:24px;background:#fde3a0;"></div>
<div class="c v s" style="left:583px;top:797px;width:63px;height:24px;background:#fde3a0;"></div>
<div class="c v s" style="left:508px;top:797px;width:75px;height:24px;background:#fde3a0;"></div>
<div class="c v s" style="left:410px;top:797px;width:98px;height:24px;background:#fde3a0;"><span class="t"><span class="ltr">۱,۴۲۵,۴۱۳</span></span></div>
<div class="c v s" style="left:349px;top:797px;width:61px;height:24px;background:#fde3a0;"></div>
<div class="c v s" style="left:288px;top:797px;width:61px;height:24px;background:#fde3a0;"></div>
<div class="c v s" style="left:217px;top:797px;width:71px;height:24px;background:#fde3a0;"></div>
<div class="c v s" style="left:118px;top:797px;width:99px;height:24px;background:#fde3a0;"><span class="t"><span class="ltr">۱,۱۲۲,۲۷۲</span></span></div>
<div class="c v s" style="left:35px;top:797px;width:83px;height:24px;background:#fde3a0;"></div>
<div class="abs" style="left:1884px;top:434px;width:1px;height:388px;background:#b5b5bf"></div><div class="abs" style="left:35px;top:821px;width:1850px;height:1px;background:#b5b5bf"></div>
<div class="h" style="left:1751px;top:865px;width:133px;height:47px;background:#0898cd;"><span class="t">شرح</span></div>
<div class="h" style="left:1702px;top:865px;width:49px;height:47px;background:#0898cd;"><span class="t">واحد</span></div>
<div class="h" style="left:1451px;top:865px;width:251px;height:23px;background:#0898cd;"><span class="t">از ابتدای سال مالی تا تاریخ <span class="ltr">۱۴<i class="z"></i>۴/<i class="z"></i>۵/۳۱</span></span></div>
<div class="h" style="left:1640px;top:888px;width:62px;height:24px;background:#0898cd;"><span class="t">مقدار</span></div>
<div class="h" style="left:1563px;top:888px;width:77px;height:24px;background:#0898cd;"><span class="t">نرخ (ریال)</span></div>
<div class="h" style="left:1451px;top:888px;width:112px;height:24px;background:#0898cd;"><span class="t">مبلغ (میلیون ریال)</span></div>
<div class="h" style="left:1234px;top:865px;width:217px;height:23px;background:#0898cd;"><span class="t">اصلاحات</span></div>
<div class="h" style="left:1414px;top:888px;width:37px;height:24px;background:#0898cd;"><span class="t">مقدار</span></div>
<div class="h" style="left:1350px;top:888px;width:64px;height:24px;background:#0898cd;"><span class="t">نرخ (ریال)</span></div>
<div class="h" style="left:1234px;top:888px;width:116px;height:24px;background:#0898cd;"><span class="t">مبلغ ( میلیون ریال)</span></div>
<div class="h" style="left:930px;top:865px;width:304px;height:23px;background:#0898cd;"><span class="t">ازابتدای سال مالی تا تاریخ <span class="ltr">۱۴<i class="z"></i>۴/<i class="z"></i>۵/۳۱</span> (اصلاح شده)</span></div>
<div class="h" style="left:1159px;top:888px;width:75px;height:24px;background:#0898cd;"><span class="t">مقدار</span></div>
<div class="h" style="left:1066px;top:888px;width:93px;height:24px;background:#0898cd;"><span class="t">نرخ (ریال)</span></div>
<div class="h" style="left:930px;top:888px;width:136px;height:24px;background:#0898cd;"><span class="t">مبلغ (میلیون ریال)</span></div>
<div class="h" style="left:687px;top:865px;width:243px;height:23px;background:#0898cd;"><span class="t">خرید دوره یک ماهه منتهی به <span class="ltr">۱۴<i class="z"></i>۴/<i class="z"></i>۶/۳۱</span></span></div>
<div class="h" style="left:877px;top:888px;width:53px;height:24px;background:#0898cd;"><span class="t">مقدار</span></div>
<div class="h" style="left:801px;top:888px;width:76px;height:24px;background:#0898cd;"><span class="t">نرخ (ریال)</span></div>
<div class="h" style="left:687px;top:888px;width:114px;height:24px;background:#0898cd;"><span class="t">مبلغ (میلیون ریال)</span></div>
<div class="h" style="left:268px;top:865px;width:419px;height:23px;background:#0898cd;"><span class="t">مواد اولیه خریداری شده از ابتدای دوره تا پایان دوره منتهی به <span class="ltr">۱۴<i class="z"></i>۴/<i class="z"></i>۶/۳۱</span></span></div>
<div class="h" style="left:586px;top:888px;width:101px;height:24px;background:#0898cd;"><span class="t">مقدار</span></div>
<div class="h" style="left:456px;top:888px;width:130px;height:24px;background:#0898cd;"><span class="t">نرخ (ریال)</span></div>
<div class="h" style="left:268px;top:888px;width:188px;height:24px;background:#0898cd;"><span class="t">مبلغ (میلیون ریال)</span></div>
<div class="h" style="left:35px;top:865px;width:233px;height:23px;background:#0898cd;"><span class="t">از ابتدای سال مالی تا تاریخ <span class="ltr">۱۴<i class="z"></i>۳/<i class="z"></i>۶/۳۱</span></span></div>
<div class="h" style="left:227px;top:888px;width:41px;height:24px;background:#0898cd;"><span class="t">مقدار</span></div>
<div class="h" style="left:157px;top:888px;width:70px;height:24px;background:#0898cd;"><span class="t">نرخ (ریال)</span></div>
<div class="h" style="left:35px;top:888px;width:122px;height:24px;background:#0898cd;"><span class="t">مبلغ (میلیون ریال)</span></div>
<div class="c t2 n b nb2" style="left:1751px;top:912px;width:133px;height:24px;background:#d3d3d3;"><span class="t">مواد اولیه داخلی</span></div>
<div class="c" style="left:1702px;top:912px;width:49px;height:24px;background:#d3d3d3;"></div>
<div class="c" style="left:1640px;top:912px;width:62px;height:24px;background:#d3d3d3;"></div>
<div class="c" style="left:1563px;top:912px;width:77px;height:24px;background:#d3d3d3;"></div>
<div class="c" style="left:1451px;top:912px;width:112px;height:24px;background:#d3d3d3;"></div>
<div class="c" style="left:1414px;top:912px;width:37px;height:24px;background:#d3d3d3;"></div>
<div class="c" style="left:1350px;top:912px;width:64px;height:24px;background:#d3d3d3;"></div>
<div class="c" style="left:1234px;top:912px;width:116px;height:24px;background:#d3d3d3;"></div>
<div class="c" style="left:1159px;top:912px;width:75px;height:24px;background:#d3d3d3;"></div>
<div class="c" style="left:1066px;top:912px;width:93px;height:24px;background:#d3d3d3;"></div>
<div class="c" style="left:930px;top:912px;width:136px;height:24px;background:#d3d3d3;"></div>
<div class="c" style="left:877px;top:912px;width:53px;height:24px;background:#d3d3d3;"></div>
<div class="c" style="left:801px;top:912px;width:76px;height:24px;background:#d3d3d3;"></div>
<div class="c" style="left:687px;top:912px;width:114px;height:24px;background:#d3d3d3;"></div>
<div class="c" style="left:586px;top:912px;width:101px;height:24px;background:#d3d3d3;"></div>
<div class="c" style="left:456px;top:912px;width:130px;height:24px;background:#d3d3d3;"></div>
<div class="c" style="left:268px;top:912px;width:188px;height:24px;background:#d3d3d3;"></div>
<div class="c" style="left:227px;top:912px;width:41px;height:24px;background:#d3d3d3;"></div>
<div class="c" style="left:157px;top:912px;width:70px;height:24px;background:#d3d3d3;"></div>
<div class="c" style="left:35px;top:912px;width:122px;height:24px;background:#d3d3d3;"></div>
<div class="c t2 r" style="left:1751px;top:936px;width:133px;height:24px;background:#d5e5f6;"><span class="t">خاک ها</span></div>
<div class="c t2 r" style="left:1702px;top:936px;width:49px;height:24px;background:#d5e5f6;"><span class="t">تن</span></div>
<div class="c t2 v2" style="left:1640px;top:936px;width:62px;height:24px;background:#d5e5f6;"><span class="t"><span class="ltr">۷۲,۶<i class="z"></i>۲</span></span></div>
<div class="c t2 v2" style="left:1563px;top:936px;width:77px;height:24px;background:#fde3a0;"><span class="t"><span class="ltr">۷۹۲,۴۷۱</span></span></div>
<div class="c t2 v2" style="left:1451px;top:936px;width:112px;height:24px;background:#d5e5f6;"><span class="t"><span class="ltr">۵۷,۵۳۵</span></span></div>
<div class="c t2 v2" style="left:1414px;top:936px;width:37px;height:24px;background:#d5e5f6;"><span class="t"><span class="ltr"><i class="z"></i></span></span></div>
<div class="c t2 v2" style="left:1350px;top:936px;width:64px;height:24px;background:#fde3a0;"><span class="t"><span class="ltr"><i class="z"></i></span></span></div>
<div class="c t2 v2" style="left:1234px;top:936px;width:116px;height:24px;background:#d5e5f6;"><span class="t"><span class="ltr"><i class="z"></i></span></span></div>
<div class="c t2 v2" style="left:1159px;top:936px;width:75px;height:24px;background:#fde3a0;"><span class="t"><span class="ltr">۷۲,۶<i class="z"></i>۲</span></span></div>
<div class="c t2 v2" style="left:1066px;top:936px;width:93px;height:24px;background:#fde3a0;"><span class="t"><span class="ltr">۷۹۲,۴۷۱</span></span></div>
<div class="c t2 v2" style="left:930px;top:936px;width:136px;height:24px;background:#fde3a0;"><span class="t"><span class="ltr">۵۷,۵۳۵</span></span></div>
<div class="c t2 v2" style="left:877px;top:936px;width:53px;height:24px;background:#d5e5f6;"><span class="t"><span class="ltr">۳,<i class="z"></i>۷۳</span></span></div>
<div class="c t2 v2" style="left:801px;top:936px;width:76px;height:24px;background:#fde3a0;"><span class="t"><span class="ltr">۳,۲۸۹,۹۴۵</span></span></div>
<div class="c t2 v2" style="left:687px;top:936px;width:114px;height:24px;background:#d5e5f6;"><span class="t"><span class="ltr">۱<i class="z"></i>,۱۱<i class="z"></i></span></span></div>
<div class="c t2 v2" style="left:586px;top:936px;width:101px;height:24px;background:#fde3a0;"><span class="t"><span class="ltr">۷۵,۶۷۵</span></span></div>
<div class="c t2 v2" style="left:456px;top:936px;width:130px;height:24px;background:#fde3a0;"><span class="t"><span class="ltr">۸۹۳,۸۸۸</span></span></div>
<div class="c t2 v2" style="left:268px;top:936px;width:188px;height:24px;background:#fde3a0;"><span class="t"><span class="ltr">۶۷,۶۴۵</span></span></div>
<div class="c t2 v2" style="left:227px;top:936px;width:41px;height:24px;background:#d5e5f6;"><span class="t"><span class="ltr"><i class="z"></i></span></span></div>
<div class="c t2 v2" style="left:157px;top:936px;width:70px;height:24px;background:#fde3a0;"><span class="t"><span class="ltr"><i class="z"></i></span></span></div>
<div class="c t2 v2" style="left:35px;top:936px;width:122px;height:24px;background:#d5e5f6;"><span class="t"><span class="ltr"><i class="z"></i></span></span></div>
<div class="c t2 r" style="left:1751px;top:960px;width:133px;height:25px;background:#ededed;"><span class="t">لعاب ها</span></div>
<div class="c t2 r" style="left:1702px;top:960px;width:49px;height:25px;background:#ededed;"><span class="t">کیلوگرم</span></div>
<div class="c t2 v2" style="left:1640px;top:960px;width:62px;height:25px;background:#ededed;"><span class="t"><span class="ltr">۶۷۵,۵۴۸</span></span></div>
<div class="c t2 v2" style="left:1563px;top:960px;width:77px;height:25px;background:#fde3a0;"><span class="t"><span class="ltr">۲۶۶,۷۳۹</span></span></div>
<div class="c t2 v2" style="left:1451px;top:960px;width:112px;height:25px;background:#ededed;"><span class="t"><span class="ltr">۱۸<i class="z"></i>,۱۹۵</span></span></div>
<div class="c t2 v2" style="left:1414px;top:960px;width:37px;height:25px;background:#ededed;"><span class="t"><span class="ltr"><i class="z"></i></span></span></div>
<div class="c t2 v2" style="left:1350px;top:960px;width:64px;height:25px;background:#fde3a0;"><span class="t"><span class="ltr"><i class="z"></i></span></span></div>
<div class="c t2 v2" style="left:1234px;top:960px;width:116px;height:25px;background:#ededed;"><span class="t"><span class="ltr"><i class="z"></i></span></span></div>
<div class="c t2 v2" style="left:1159px;top:960px;width:75px;height:25px;background:#fde3a0;"><span class="t"><span class="ltr">۶۷۵,۵۴۸</span></span></div>
<div class="c t2 v2" style="left:1066px;top:960px;width:93px;height:25px;background:#fde3a0;"><span class="t"><span class="ltr">۲۶۶,۷۳۹</span></span></div>
<div class="c t2 v2" style="left:930px;top:960px;width:136px;height:25px;background:#fde3a0;"><span class="t"><span class="ltr">۱۸<i class="z"></i>,۱۹۵</span></span></div>
<div class="c t2 v2" style="left:877px;top:960px;width:53px;height:25px;background:#ededed;"><span class="t"><span class="ltr">۶۷,۱۴۶</span></span></div>
<div class="c t2 v2" style="left:801px;top:960px;width:76px;height:25px;background:#fde3a0;"><span class="t"><span class="ltr">۱۵۵,۴<i class="z"></i>۸</span></span></div>
<div class="c t2 v2" style="left:687px;top:960px;width:114px;height:25px;background:#ededed;"><span class="t"><span class="ltr">۱<i class="z"></i>,۴۳۵</span></span></div>
<div class="c t2 v2" style="left:586px;top:960px;width:101px;height:25px;background:#fde3a0;"><span class="t"><span class="ltr">۷۴۲,۶۹۴</span></span></div>
<div class="c t2 v2" style="left:456px;top:960px;width:130px;height:25px;background:#fde3a0;"><span class="t"><span class="ltr">۲۵۶,۶۷۴</span></span></div>
<div class="c t2 v2" style="left:268px;top:960px;width:188px;height:25px;background:#fde3a0;"><span class="t"><span class="ltr">۱۹<i class="z"></i>,۶۳<i class="z"></i></span></span></div>
<div class="c t2 v2" style="left:227px;top:960px;width:41px;height:25px;background:#ededed;"><span class="t"><span class="ltr"><i class="z"></i></span></span></div>
<div class="c t2 v2" style="left:157px;top:960px;width:70px;height:25px;background:#fde3a0;"><span class="t"><span class="ltr"><i class="z"></i></span></span></div>
<div class="c t2 v2" style="left:35px;top:960px;width:122px;height:25px;background:#ededed;"><span class="t"><span class="ltr"><i class="z"></i></span></span></div>
<div class="c t2 r" style="left:1751px;top:985px;width:133px;height:24px;background:#d5e5f6;"><span class="t">رنگ ها</span></div>
<div class="c t2 r" style="left:1702px;top:985px;width:49px;height:24px;background:#d5e5f6;"><span class="t">کیلوگرم</span></div>
<div class="c t2 v2" style="left:1640px;top:985px;width:62px;height:24px;background:#d5e5f6;"><span class="t"><span class="ltr">۷۸۳</span></span></div>
<div class="c t2 v2" style="left:1563px;top:985px;width:77px;height:24px;background:#fde3a0;"><span class="t"><span class="ltr">۱۵,۶۹۷,۳۱۸</span></span></div>
<div class="c t2 v2" style="left:1451px;top:985px;width:112px;height:24px;background:#d5e5f6;"><span class="t"><span class="ltr">۱۲,۲۹۱</span></span></div>
<div class="c t2 v2" style="left:1414px;top:985px;width:37px;height:24px;background:#d5e5f6;"><span class="t"><span class="ltr"><i class="z"></i></span></span></div>
<div class="c t2 v2" style="left:1350px;top:985px;width:64px;height:24px;background:#fde3a0;"><span class="t"><span class="ltr"><i class="z"></i></span></span></div>
<div class="c t2 v2" style="left:1234px;top:985px;width:116px;height:24px;background:#d5e5f6;"><span class="t"><span class="ltr"><i class="z"></i></span></span></div>
<div class="c t2 v2" style="left:1159px;top:985px;width:75px;height:24px;background:#fde3a0;"><span class="t"><span class="ltr">۷۸۳</span></span></div>
<div class="c t2 v2" style="left:1066px;top:985px;width:93px;height:24px;background:#fde3a0;"><span class="t"><span class="ltr">۱۵,۶۹۷,۳۱۸</span></span></div>
<div class="c t2 v2" style="left:930px;top:985px;width:136px;height:24px;background:#fde3a0;"><span class="t"><span class="ltr">۱۲,۲۹۱</span></span></div>
<div class="c t2 v2" style="left:877px;top:985px;width:53px;height:24px;background:#d5e5f6;"><span class="t"><span class="ltr"><i class="z"></i></span></span></div>
<div class="c t2 v2" style="left:801px;top:985px;width:76px;height:24px;background:#fde3a0;"><span class="t"><span class="ltr"><i class="z"></i></span></span></div>
<div class="c t2 v2" style="left:687px;top:985px;width:114px;height:24px;background:#d5e5f6;"><span class="t"><span class="ltr"><i class="z"></i></span></span></div>
<div class="c t2 v2" style="left:586px;top:985px;width:101px;height:24px;background:#fde3a0;"><span class="t"><span class="ltr">۷۸۳</span></span></div>
<div class="c t2 v2" style="left:456px;top:985px;width:130px;height:24px;background:#fde3a0;"><span class="t"><span class="ltr">۱۵,۶۹۷,۳۱۸</span></span></div>
<div class="c t2 v2" style="left:268px;top:985px;width:188px;height:24px;background:#fde3a0;"><span class="t"><span class="ltr">۱۲,۲۹۱</span></span></div>
<div class="c t2 v2" style="left:227px;top:985px;width:41px;height:24px;background:#d5e5f6;"><span class="t"><span class="ltr"><i class="z"></i></span></span></div>
<div class="c t2 v2" style="left:157px;top:985px;width:70px;height:24px;background:#fde3a0;"><span class="t"><span class="ltr"><i class="z"></i></span></span></div>
<div class="c t2 v2" style="left:35px;top:985px;width:122px;height:24px;background:#d5e5f6;"><span class="t"><span class="ltr"><i class="z"></i></span></span></div>
<div class="c t2 r" style="left:1751px;top:1009px;width:133px;height:24px;background:#ededed;"><span class="t">کارتن ها</span></div>
<div class="c t2 r" style="left:1702px;top:1009px;width:49px;height:24px;background:#ededed;"><span class="t">عدد</span></div>
<div class="c t2 v2" style="left:1640px;top:1009px;width:62px;height:24px;background:#ededed;"><span class="t"><span class="ltr">۵۸۱,۲۸<i class="z"></i></span></span></div>
<div class="c t2 v2" style="left:1563px;top:1009px;width:77px;height:24px;background:#fde3a0;"><span class="t"><span class="ltr">۱۳۴,۴<i class="z"></i>۷</span></span></div>
<div class="c t2 v2" style="left:1451px;top:1009px;width:112px;height:24px;background:#ededed;"><span class="t"><span class="ltr">۷۸,۱۲۸</span></span></div>
<div class="c t2 v2" style="left:1414px;top:1009px;width:37px;height:24px;background:#ededed;"><span class="t"><span class="ltr"><i class="z"></i></span></span></div>
<div class="c t2 v2" style="left:1350px;top:1009px;width:64px;height:24px;background:#fde3a0;"><span class="t"><span class="ltr"><i class="z"></i></span></span></div>
<div class="c t2 v2" style="left:1234px;top:1009px;width:116px;height:24px;background:#ededed;"><span class="t"><span class="ltr"><i class="z"></i></span></span></div>
<div class="c t2 v2" style="left:1159px;top:1009px;width:75px;height:24px;background:#fde3a0;"><span class="t"><span class="ltr">۵۸۱,۲۸<i class="z"></i></span></span></div>
<div class="c t2 v2" style="left:1066px;top:1009px;width:93px;height:24px;background:#fde3a0;"><span class="t"><span class="ltr">۱۳۴,۴<i class="z"></i>۷</span></span></div>
<div class="c t2 v2" style="left:930px;top:1009px;width:136px;height:24px;background:#fde3a0;"><span class="t"><span class="ltr">۷۸,۱۲۸</span></span></div>
<div class="c t2 v2" style="left:877px;top:1009px;width:53px;height:24px;background:#ededed;"><span class="t"><span class="ltr">۱۱<i class="z"></i>,۶۵۲</span></span></div>
<div class="c t2 v2" style="left:801px;top:1009px;width:76px;height:24px;background:#fde3a0;"><span class="t"><span class="ltr">۱۹۳,<i class="z"></i>۶۵</span></span></div>
<div class="c t2 v2" style="left:687px;top:1009px;width:114px;height:24px;background:#ededed;"><span class="t"><span class="ltr">۲۱,۳۶۳</span></span></div>
<div class="c t2 v2" style="left:586px;top:1009px;width:101px;height:24px;background:#fde3a0;"><span class="t"><span class="ltr">۶۹۱,۹۳۲</span></span></div>
<div class="c t2 v2" style="left:456px;top:1009px;width:130px;height:24px;background:#fde3a0;"><span class="t"><span class="ltr">۱۴۳,۷۸۷</span></span></div>
<div class="c t2 v2" style="left:268px;top:1009px;width:188px;height:24px;background:#fde3a0;"><span class="t"><span class="ltr">۹۹,۴۹۱</span></span></div>
<div class="c t2 v2" style="left:227px;top:1009px;width:41px;height:24px;background:#ededed;"><span class="t"><span class="ltr"><i class="z"></i></span></span></div>
<div class="c t2 v2" style="left:157px;top:1009px;width:70px;height:24px;background:#fde3a0;"><span class="t"><span class="ltr"><i class="z"></i></span></span></div>
<div class="c t2 v2" style="left:35px;top:1009px;width:122px;height:24px;background:#ededed;"><span class="t"><span class="ltr"><i class="z"></i></span></span></div>
<div class="c t2 r" style="left:1751px;top:1033px;width:133px;height:24px;background:#d5e5f6;"><span class="t">پالت چوبي</span></div>
<div class="c t2 r" style="left:1702px;top:1033px;width:49px;height:24px;background:#d5e5f6;"><span class="t">عدد</span></div>
<div class="c t2 v2" style="left:1640px;top:1033px;width:62px;height:24px;background:#d5e5f6;"><span class="t"><span class="ltr">۶,۹۳۸</span></span></div>
<div class="c t2 v2" style="left:1563px;top:1033px;width:77px;height:24px;background:#fde3a0;"><span class="t"><span class="ltr">۳,۹۵۴,۵۹۸</span></span></div>
<div class="c t2 v2" style="left:1451px;top:1033px;width:112px;height:24px;background:#d5e5f6;"><span class="t"><span class="ltr">۲۷,۴۳۷</span></span></div>
<div class="c t2 v2" style="left:1414px;top:1033px;width:37px;height:24px;background:#d5e5f6;"><span class="t"><span class="ltr"><i class="z"></i></span></span></div>
<div class="c t2 v2" style="left:1350px;top:1033px;width:64px;height:24px;background:#fde3a0;"><span class="t"><span class="ltr"><i class="z"></i></span></span></div>
<div class="c t2 v2" style="left:1234px;top:1033px;width:116px;height:24px;background:#d5e5f6;"><span class="t"><span class="ltr"><i class="z"></i></span></span></div>
<div class="c t2 v2" style="left:1159px;top:1033px;width:75px;height:24px;background:#fde3a0;"><span class="t"><span class="ltr">۶,۹۳۸</span></span></div>
<div class="c t2 v2" style="left:1066px;top:1033px;width:93px;height:24px;background:#fde3a0;"><span class="t"><span class="ltr">۳,۹۵۴,۵۹۸</span></span></div>
<div class="c t2 v2" style="left:930px;top:1033px;width:136px;height:24px;background:#fde3a0;"><span class="t"><span class="ltr">۲۷,۴۳۷</span></span></div>
<div class="c t2 v2" style="left:877px;top:1033px;width:53px;height:24px;background:#d5e5f6;"><span class="t"><span class="ltr">۷۵۲</span></span></div>
<div class="c t2 v2" style="left:801px;top:1033px;width:76px;height:24px;background:#fde3a0;"><span class="t"><span class="ltr">۳,۹<i class="z"></i><i class="z"></i>,۲۶۶</span></span></div>
<div class="c t2 v2" style="left:687px;top:1033px;width:114px;height:24px;background:#d5e5f6;"><span class="t"><span class="ltr">۲,۹۳۳</span></span></div>
<div class="c t2 v2" style="left:586px;top:1033px;width:101px;height:24px;background:#fde3a0;"><span class="t"><span class="ltr">۷,۶۹<i class="z"></i></span></span></div>
<div class="c t2 v2" style="left:456px;top:1033px;width:130px;height:24px;background:#fde3a0;"><span class="t"><span class="ltr">۳,۹۴۹,۲۸۵</span></span></div>
<div class="c t2 v2" style="left:268px;top:1033px;width:188px;height:24px;background:#fde3a0;"><span class="t"><span class="ltr">۳<i class="z"></i>,۳۷<i class="z"></i></span></span></div>
<div class="c t2 v2" style="left:227px;top:1033px;width:41px;height:24px;background:#d5e5f6;"><span class="t"><span class="ltr"><i class="z"></i></span></span></div>
<div class="c t2 v2" style="left:157px;top:1033px;width:70px;height:24px;background:#fde3a0;"><span class="t"><span class="ltr"><i class="z"></i></span></span></div>
<div class="c t2 v2" style="left:35px;top:1033px;width:122px;height:24px;background:#d5e5f6;"><span class="t"><span class="ltr"><i class="z"></i></span></span></div>
<div class="c t2 r" style="left:1751px;top:1057px;width:133px;height:24px;background:#ededed;"><span class="t">پلاستیک</span></div>
<div class="c t2 r" style="left:1702px;top:1057px;width:49px;height:24px;background:#ededed;"><span class="t">کیلوگرم</span></div>
<div class="c t2 v2" style="left:1640px;top:1057px;width:62px;height:24px;background:#ededed;"><span class="t"><span class="ltr">۸,۱۷۳</span></span></div>
<div class="c t2 v2" style="left:1563px;top:1057px;width:77px;height:24px;background:#fde3a0;"><span class="t"><span class="ltr">۶۵۷,۴<i class="z"></i>۹</span></span></div>
<div class="c t2 v2" style="left:1451px;top:1057px;width:112px;height:24px;background:#ededed;"><span class="t"><span class="ltr">۵,۳۷۳</span></span></div>
<div class="c t2 v2" style="left:1414px;top:1057px;width:37px;height:24px;background:#ededed;"><span class="t"><span class="ltr"><i class="z"></i></span></span></div>
<div class="c t2 v2" style="left:1350px;top:1057px;width:64px;height:24px;background:#fde3a0;"><span class="t"><span class="ltr"><i class="z"></i></span></span></div>
<div class="c t2 v2" style="left:1234px;top:1057px;width:116px;height:24px;background:#ededed;"><span class="t"><span class="ltr"><i class="z"></i></span></span></div>
<div class="c t2 v2" style="left:1159px;top:1057px;width:75px;height:24px;background:#fde3a0;"><span class="t"><span class="ltr">۸,۱۷۳</span></span></div>
<div class="c t2 v2" style="left:1066px;top:1057px;width:93px;height:24px;background:#fde3a0;"><span class="t"><span class="ltr">۶۵۷,۴<i class="z"></i>۹</span></span></div>
<div class="c t2 v2" style="left:930px;top:1057px;width:136px;height:24px;background:#fde3a0;"><span class="t"><span class="ltr">۵,۳۷۳</span></span></div>
<div class="c t2 v2" style="left:877px;top:1057px;width:53px;height:24px;background:#ededed;"><span class="t"><span class="ltr"><i class="z"></i></span></span></div>
<div class="c t2 v2" style="left:801px;top:1057px;width:76px;height:24px;background:#fde3a0;"><span class="t"><span class="ltr"><i class="z"></i></span></span></div>
<div class="c t2 v2" style="left:687px;top:1057px;width:114px;height:24px;background:#ededed;"><span class="t"><span class="ltr"><i class="z"></i></span></span></div>
<div class="c t2 v2" style="left:586px;top:1057px;width:101px;height:24px;background:#fde3a0;"><span class="t"><span class="ltr">۸,۱۷۳</span></span></div>
<div class="c t2 v2" style="left:456px;top:1057px;width:130px;height:24px;background:#fde3a0;"><span class="t"><span class="ltr">۶۵۷,۴<i class="z"></i>۹</span></span></div>
<div class="c t2 v2" style="left:268px;top:1057px;width:188px;height:24px;background:#fde3a0;"><span class="t"><span class="ltr">۵,۳۷۳</span></span></div>
<div class="c t2 v2" style="left:227px;top:1057px;width:41px;height:24px;background:#ededed;"><span class="t"><span class="ltr"><i class="z"></i></span></span></div>
<div class="c t2 v2" style="left:157px;top:1057px;width:70px;height:24px;background:#fde3a0;"><span class="t"><span class="ltr"><i class="z"></i></span></span></div>
<div class="c t2 v2" style="left:35px;top:1057px;width:122px;height:24px;background:#ededed;"><span class="t"><span class="ltr"><i class="z"></i></span></span></div>
<div class="abs" style="left:1884px;top:912px;width:1px;height:168px;background:#b5b5bf"></div>
<div class="abs" style="left:557px;top:482px;width:800px;height:110px;line-height:110px;text-align:center;direction:ltr;font-size:96px;font-weight:bold;color:#ededed;mix-blend-mode:multiply;transform:rotate(-46deg);white-space:nowrap;pointer-events:none">@Codal360.ir</div>
</body>
</html>
